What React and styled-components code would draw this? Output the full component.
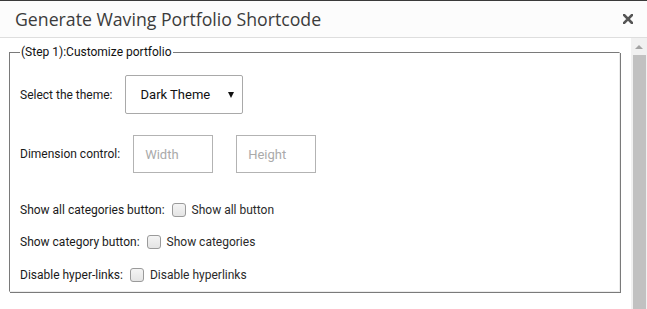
import styled, { createGlobalStyle } from "styled-components";

const Global = createGlobalStyle`
  html, body {
    margin: 0;
    padding: 0;
    background: #fff;
    overflow: hidden;
  }
`;

const Modal = styled.div`
  width: 647px;
  height: 309px;
  display: flex;
  flex-direction: column;
  border-top: 1px solid #3a3a3a;
  box-sizing: border-box;
  font-family: Roboto, "Liberation Sans", sans-serif;
`;

const Header = styled.div`
  height: 36px;
  background: #fcfcfc;
  border-bottom: 1px solid #dedede;
  display: flex;
  align-items: center;
  justify-content: space-between;
  padding: 0 14px 0 15px;
`;

const Title = styled.h1`
  margin: 0;
  font-family: "Open Sans", "Liberation Sans", sans-serif;
  font-size: 17.7px;
  font-weight: 400;
  color: #3b3b3b;
`;

const Close = styled.button`
  border: 0;
  background: none;
  padding: 0;
  width: 10px;
  height: 10px;
  display: flex;
  cursor: pointer;
`;

const Body = styled.div`
  flex: 1;
  display: flex;
  min-height: 0;
`;

const Main = styled.div`
  flex: 1;
  padding: 7px 11px 0 9px;
`;

const Fieldset = styled.fieldset`
  margin: 0;
  padding: 0 0 6px 10px;
  border-style: solid;
  border-width: 1px;
  border-color: #7a7a7a #ececec #ececec #7a7a7a;
  box-shadow: inset 1px 1px 0 #ffffff, 1px 1px 0 #7a7a7a;
`;

const Legend = styled.legend`
  padding: 0 1px;
  font-size: 12px;
  color: #111;
`;

const Row = styled.div`
  display: flex;
  align-items: center;
  margin-top: ${(p) => p.$mt}px;
  height: ${(p) => p.$h}px;
`;

const Label = styled.span`
  font-size: 12px;
  color: #1a1a1a;
  margin-right: ${(p) => p.$gap}px;
`;

const SelectBox = styled.div`
  width: 118px;
  height: 39px;
  box-sizing: border-box;
  border: 1px solid #a9a9a9;
  border-radius: 2px;
  display: flex;
  align-items: center;
  justify-content: space-between;
  padding: 0 8px 0 15px;
  font-size: 13px;
  color: #111;
`;

const Arrow = styled.span`
  width: 0;
  height: 0;
  border-left: 3.5px solid transparent;
  border-right: 3.5px solid transparent;
  border-top: 6px solid #111;
`;

const Input = styled.input`
  width: 80px;
  height: 38px;
  box-sizing: border-box;
  border: 1px solid #b3b3b3;
  padding: 0 0 0 11px;
  margin-right: ${(p) => p.$gap || 0}px;
  font-family: Roboto, "Liberation Sans", sans-serif;
  font-size: 13px;
  outline: none;
  &::placeholder {
    color: #aaa;
  }
`;

const Check = styled.span`
  width: 12px;
  height: 12px;
  border: 1px solid #9a9a9a;
  border-radius: 3px;
  background: linear-gradient(#f4f4f4, #e4e4e4);
  margin-right: 6px;
`;

const CheckText = styled.span`
  font-size: 12px;
  color: #2a2a2a;
`;

const Scrollbar = styled.div`
  width: 16px;
  background: #f1f1f1;
  display: flex;
  flex-direction: column;
  align-items: center;
`;

const UpArrow = styled.span`
  margin-top: 7px;
  width: 0;
  height: 0;
  border-left: 4px solid transparent;
  border-right: 4px solid transparent;
  border-bottom: 4px solid #a3a3a3;
`;

const Thumb = styled.div`
  margin-top: 6px;
  width: 13px;
  flex: 1;
  background: #c1c1c1;
`;

const checks = [
  { label: "Show all categories button:", text: "Show all button", mt: 27 },
  { label: "Show category button:", text: "Show categories", mt: 12 },
  { label: "Disable hyper-links:", text: "Disable hyperlinks", mt: 13 },
];

export default function App() {
  return (
    <>
      <Global />
      <Modal>
        <Header>
          <Title>Generate Waving Portfolio Shortcode</Title>
          <Close aria-label="close">
            <svg width="10" height="10" viewBox="0 0 10 10">
              <path d="M1 1L9 9M9 1L1 9" stroke="#555" strokeWidth="2.6" strokeLinecap="square" />
            </svg>
          </Close>
        </Header>
        <Body>
          <Main>
            <Fieldset>
              <Legend>(Step 1):Customize portfolio</Legend>
              <Row $mt={16} $h={39}>
                <Label $gap={12}>Select the theme:</Label>
                <SelectBox>
                  Dark Theme
                  <Arrow />
                </SelectBox>
              </Row>
              <Row $mt={21} $h={38}>
                <Label $gap={13}>Dimension control:</Label>
                <Input placeholder="Width" $gap={23} />
                <Input placeholder="Height" />
              </Row>
              {checks.map((c) => (
                <Row key={c.label} $mt={c.mt} $h={20}>
                  <Label $gap={7}>{c.label}</Label>
                  <Check />
                  <CheckText>{c.text}</CheckText>
                </Row>
              ))}
            </Fieldset>
          </Main>
          <Scrollbar>
            <UpArrow />
            <Thumb />
          </Scrollbar>
        </Body>
      </Modal>
    </>
  );
}
